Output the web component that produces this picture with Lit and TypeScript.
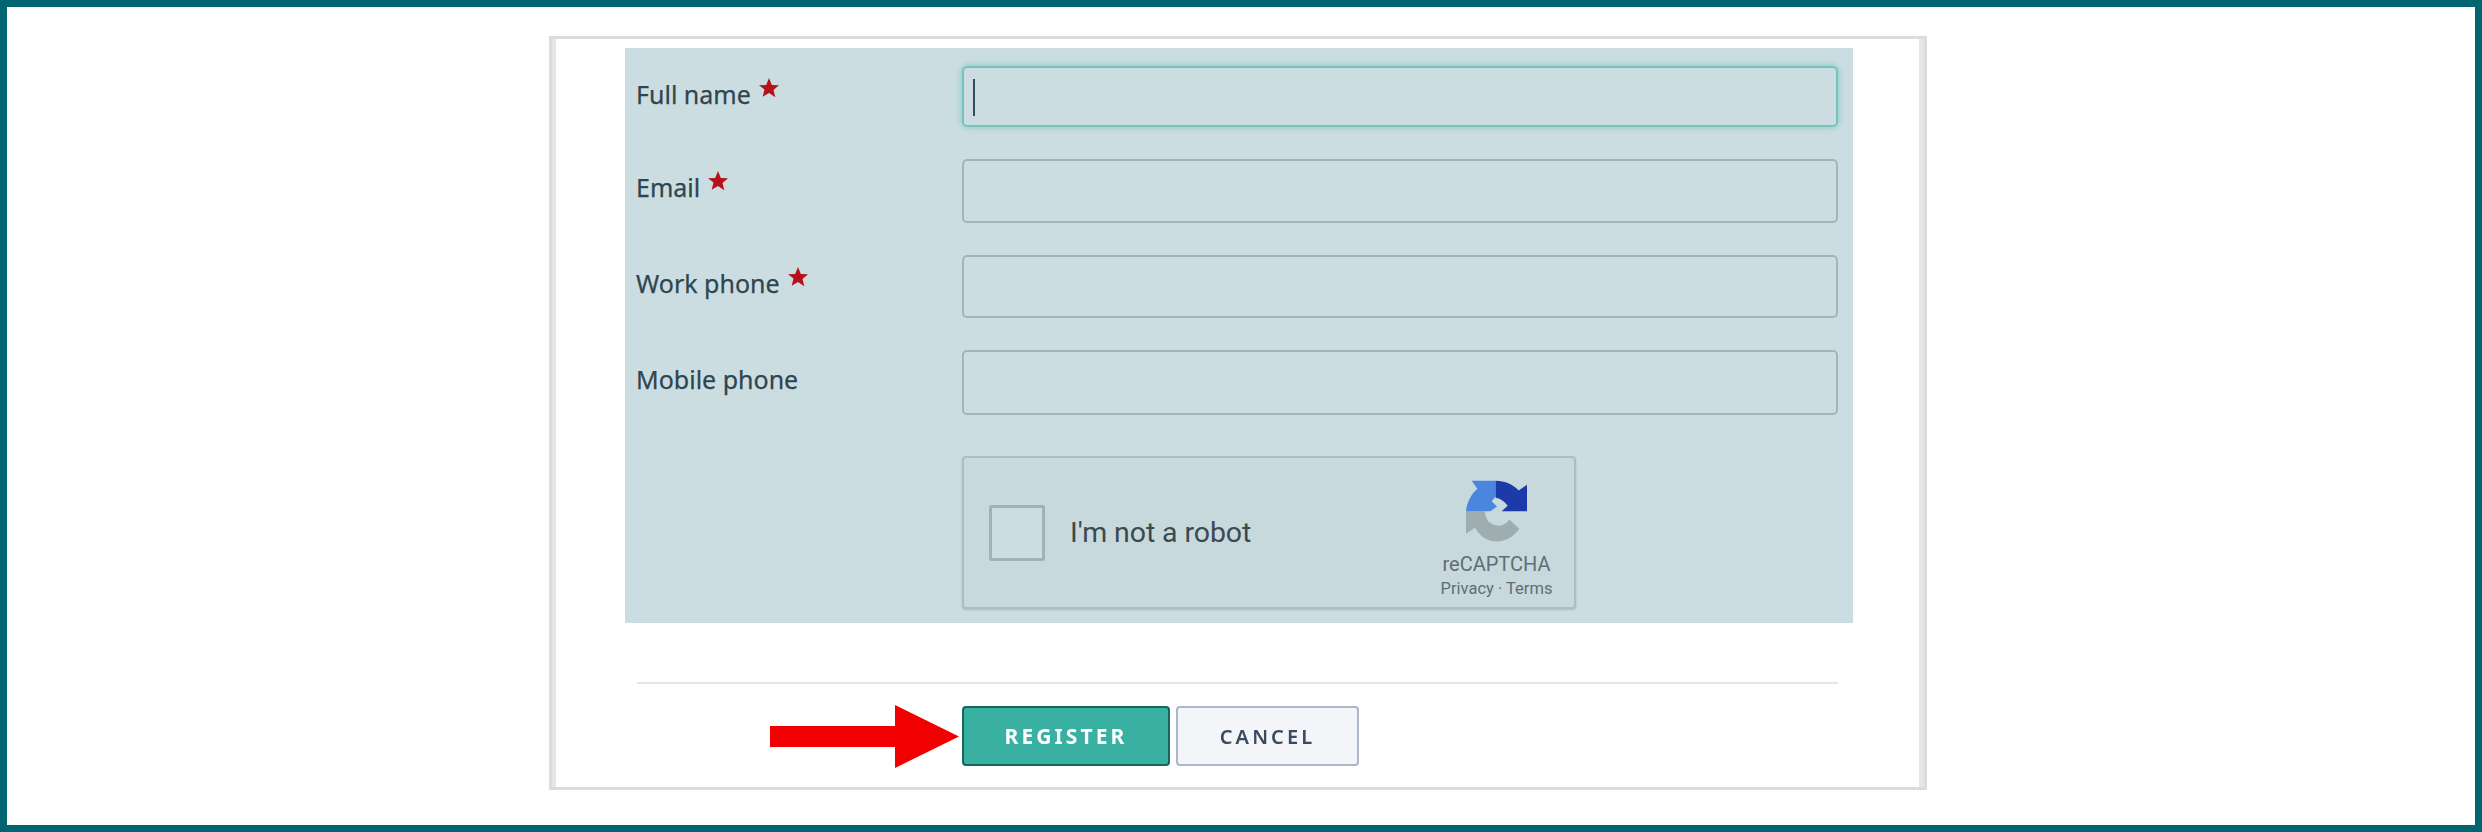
import { LitElement, html, css, svg } from "lit";
import { customElement } from "lit/decorators.js";

const star = html`<svg class="star" viewBox="0 0 24 24"><path d="M12 0l3.400 8.300 8.600.5-6.600 5.500 2.200 8.700L12 18l-7.600 4.500 2.200-8.700L0 8.800l8.600-.5z"/></svg>`;

const logo = html`<svg class="logo" viewBox="133 30 183 183">
  ${svg`<path fill="#a0adb0" d="M133 122H190C190 148 206 165 232 165 246 165 256 158 263 147L293 175C277 199 252 213 225 213 198 213 176 200 160 172L133 190Z"/>
  <path fill="#4a86e0" d="M133 122C136 95 148 72 167 55L150 31H222V78L210 92 226 108 206 122H133Z"/>
  <path fill="#1c3aa9" d="M222 31C250 31 274 42 291 60L316 43V122H240L258 106C250 94 238 85 222 82Z"/>`}
</svg>`;

@customElement("app-root")
export class AppRoot extends LitElement {
  static styles = css`
    :host { display: block; }
    .frame {
      box-sizing: border-box; width: 2482px; height: 832px; border: 7px solid #006570;
      background: #fff; padding: 29px 0 35px 542px;
      font-family: "Noto Sans", sans-serif;
    }
    .card {
      box-sizing: border-box; width: 1378px; height: 754px; border: 3px solid #dcdcdc;
      background: #fff; display: flex; flex-direction: column; align-items: flex-start;
    }
    .inner {
      box-sizing: border-box; width: 100%; height: 100%;
      border-left: 4px solid #e4e6ea; border-right: 5px solid #e4e6ea;
      padding: 9px 0 0 69px; filter: blur(0.45px);
    }
    .panel {
      box-sizing: border-box; width: 1228px; height: 575px; background: #cbdde1;
      padding: 18px 15px 0 11px; display: flex; flex-direction: column; gap: 32px;
    }
    .row { display: grid; grid-template-columns: 326px 876px; }
    .label {
      color: #2f4550; font-size: 25px; line-height: 32px; display: flex; align-items: flex-start;
      -webkit-text-stroke: 0.25px #2f4550;
    }
    .r1 .label { padding-top: 12px; }
    .r2 .label { padding-top: 12px; }
    .r3 .label { padding-top: 12px; }
    .r4 .label { padding-top: 13px; }
    .star { width: 20px; height: 20px; fill: #b5121b; margin: 0 0 0 8px; }
    .input { box-sizing: border-box; border: 2px solid #9fb5b9; border-radius: 5px; }
    .r1 .input {
      height: 61px; border-color: #76c3bd; box-shadow: 0 0 6px #7cc5c0;
      padding: 11px 0 0 9px;
    }
    .r2 .input { height: 64px; }
    .r3 .input { height: 63px; }
    .r4 .input { height: 65px; }
    .caret { width: 2px; height: 37px; background: #2f4f60; }
    .captcha-row { margin-top: 9px; }
    .captcha {
      box-sizing: border-box; width: 614px; height: 153px; background: #c7d9dd;
      border: 2px solid #aabfc3; border-radius: 4px; box-shadow: 0 1px 2px #a9bcc0;
      display: flex; align-items: center; padding: 0 20px 0 25px; font-family: Roboto, sans-serif;
    }
    .box {
      box-sizing: border-box; width: 56px; height: 56px; border: 3px solid #9fb3b7;
      border-radius: 2px; background: #cbdde1; margin-right: 25px;
    }
    .robot { color: #3c4a4e; font-size: 28.500px; flex: 1; letter-spacing: -0.1px; }
    .brand {
      display: flex; flex-direction: column; align-items: center; width: 115px; color: #5f6e72;
      padding-top: 17px;
    }
    .logo { width: 61px; height: 62px; display: block; margin-bottom: 10px; }
    .name { font-size: 20px; line-height: 24px; white-space: nowrap; }
    .links { font-size: 16.500px; line-height: 26px; white-space: nowrap; }
    .rule { width: 1201px; height: 2px; background: #e4e6e8; margin: 59px 0 0 12px; }
    .actions { display: flex; gap: 6px; align-items: flex-start; margin: 22px 0 0 0; }
    .arrow { width: 189px; height: 63px; margin: -1px -3px 0 145px; display: block; }
    button {
      box-sizing: border-box; height: 60px; border-radius: 4px; font-family: "Noto Sans", sans-serif;
      font-size: 21px; font-weight: 700; letter-spacing: 3.1px; padding: 0;
    }
    .register { width: 208px; background: #3ab0a2; color: #fff; border: 2px solid #17655f; }
    .cancel { width: 183px; background: #f3f5f8; color: #3a4a5e; border: 2px solid #a9b7c9; font-weight: 600; font-size: 20px; }
  `;

  private field(label: string, cls: string, required: boolean, focused = false) {
    return html`<div class="row ${cls}">
      <div class="label"><span>${label}</span>${required ? star : ""}</div>
      <div class="input">${focused ? html`<div class="caret"></div>` : ""}</div>
    </div>`;
  }

  render() {
    return html`<div class="frame"><div class="card"><div class="inner">
      <div class="panel">
        ${this.field("Full name", "r1", true, true)}
        ${this.field("Email", "r2", true)}
        ${this.field("Work phone", "r3", true)}
        ${this.field("Mobile phone", "r4", false)}
        <div class="row captcha-row">
          <div></div>
          <div class="captcha">
            <div class="box"></div>
            <div class="robot">I'm not a robot</div>
            <div class="brand">${logo}<div class="name">reCAPTCHA</div><div class="links">Privacy · Terms</div></div>
          </div>
        </div>
      </div>
      <div class="rule"></div>
      <div class="actions">
        <svg class="arrow" viewBox="0 0 189 63"><path fill="#f00000" d="M0 21H125V0L189 31.500 125 63V42H0Z"/></svg>
        <button class="register">REGISTER</button>
        <button class="cancel">CANCEL</button>
      </div>
    </div></div></div>`;
  }
}
